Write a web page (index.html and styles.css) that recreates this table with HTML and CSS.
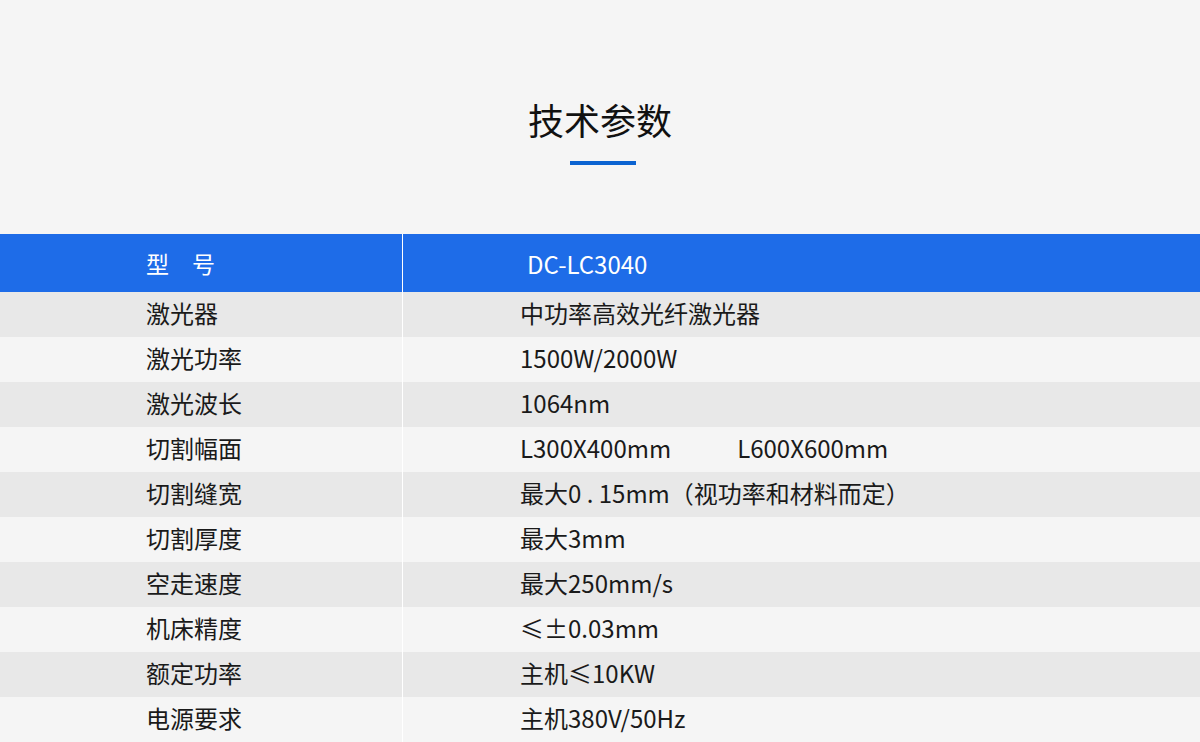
FILE: index.html
```html
<!DOCTYPE html>
<html lang="zh">
<head>
<meta charset="utf-8">
<title>技术参数</title>
<link rel="stylesheet" href="styles.css">
</head>
<body>
<div class="page">
  <div class="head">
    <h1 class="title">技术参数</h1>
    <div class="bar"></div>
  </div>
  <div class="spec">
    <div class="row row-head">
      <div class="c1"><span class="hlabel">型　号</span></div>
      <div class="c2">DC-LC3040</div>
    </div>
    <div class="row dark"><div class="c1">激光器</div><div class="c2">中功率高效光纤激光器</div></div>
    <div class="row"><div class="c1">激光功率</div><div class="c2">1500W/2000W</div></div>
    <div class="row dark"><div class="c1">激光波长</div><div class="c2">1064nm</div></div>
    <div class="row"><div class="c1">切割幅面</div><div class="c2">L300X400mm<span class="gap"></span>L600X600mm</div></div>
    <div class="row dark"><div class="c1">切割缝宽</div><div class="c2">最大0 . 15mm（视功率和材料而定）</div></div>
    <div class="row"><div class="c1">切割厚度</div><div class="c2">最大3mm</div></div>
    <div class="row dark"><div class="c1">空走速度</div><div class="c2">最大250mm/s</div></div>
    <div class="row"><div class="c1">机床精度</div><div class="c2">≤±0.03mm</div></div>
    <div class="row dark"><div class="c1">额定功率</div><div class="c2">主机≤10KW</div></div>
    <div class="row"><div class="c1">电源要求</div><div class="c2">主机380V/50Hz</div></div>
  </div>
</div>
</body>
</html>
```
FILE: styles.css
```css
html, body {
  margin: 0;
  padding: 0;
  background: #f5f5f5;
}
body {
  font-family: "Noto Sans CJK SC", "Noto Sans", sans-serif;
  color: #1a1a1a;
}
.page {
  width: 1200px;
  height: 742px;
  overflow: hidden;
}
.head {
  display: flex;
  flex-direction: column;
  align-items: center;
  padding-top: 97px;
}
.title {
  margin: 0;
  font-size: 36px;
  font-weight: 400;
  line-height: 44px;
  color: #111;
}
.bar {
  width: 66px;
  height: 4px;
  background: #0b63d1;
  margin-top: 20px;
  margin-left: 5px;
}
.spec {
  margin-top: 69px;
}
.row {
  display: flex;
  height: 45px;
  align-items: stretch;
  font-size: 24px;
  background: #f5f5f5;
}
.row.dark {
  background: #e8e8e8;
}
.row-head {
  height: 58px;
  background: #1e6ce8;
  color: #fff;
}
.hlabel {
  font-size: 23px;
}
.c1 {
  width: 403px;
  padding-left: 146px;
  padding-bottom: 5px;
  box-sizing: border-box;
  display: flex;
  align-items: center;
  border-right: 1px solid #ffffff;
}
.c2 {
  flex: 1;
  padding-left: 117px;
  padding-bottom: 5px;
  display: flex;
  align-items: center;
}
.row-head .c1,
.row-head .c2 {
  padding-bottom: 0;
}
.row-head .c2 {
  padding-left: 124px;
}
.gap {
  display: inline-block;
  width: 66px;
}
```
